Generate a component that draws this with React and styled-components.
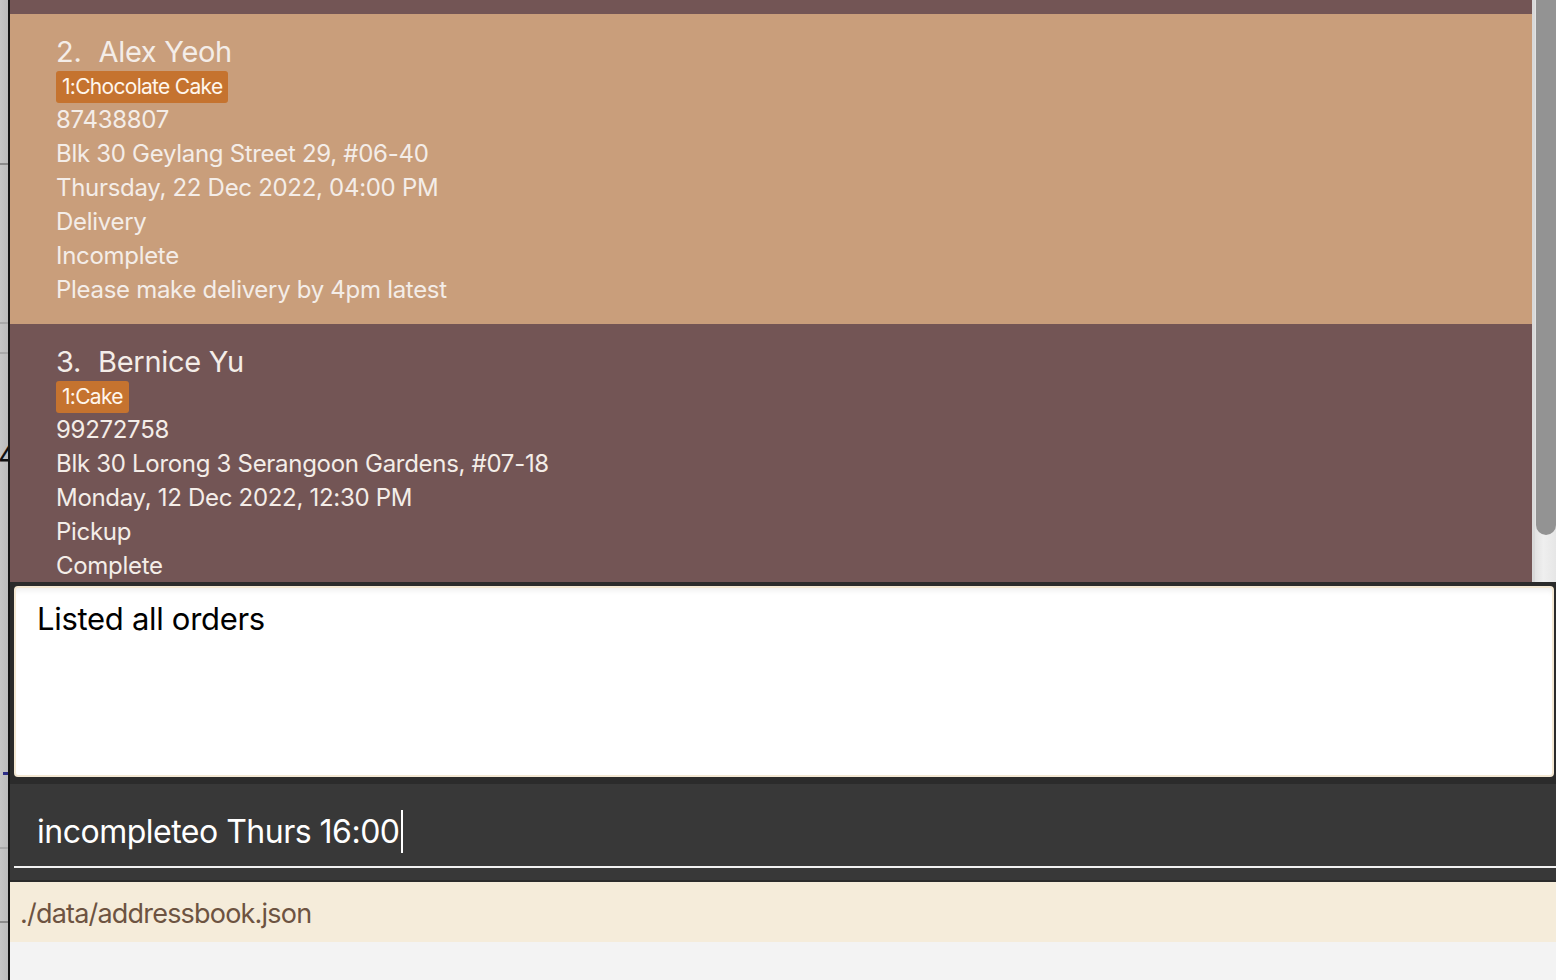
import React, { useEffect, useRef } from "react";
import styled, { createGlobalStyle } from "styled-components";

const orders = [
  {
    id: 1,
    name: "John Doe",
    tag: "2:Cupcake",
    phone: "98765432",
    address: "311, Clementi Ave 2, #02-25",
    date: "Friday, 02 Dec 2022, 10:00 AM",
    method: "Pickup",
    status: "Complete",
    note: "",
  },
  {
    id: 2,
    name: "Alex Yeoh",
    tag: "1:Chocolate Cake",
    phone: "87438807",
    address: "Blk 30 Geylang Street 29, #06-40",
    date: "Thursday, 22 Dec 2022, 04:00 PM",
    method: "Delivery",
    status: "Incomplete",
    note: "Please make delivery by 4pm latest",
  },
  {
    id: 3,
    name: "Bernice Yu",
    tag: "1:Cake",
    phone: "99272758",
    address: "Blk 30 Lorong 3 Serangoon Gardens, #07-18",
    date: "Monday, 12 Dec 2022, 12:30 PM",
    method: "Pickup",
    status: "Complete",
    note: "",
  },
];

const GlobalStyle = createGlobalStyle`
  html, body {
    margin: 0;
    padding: 0;
    background: #f3f3f3;
    font-family: Inter, "Open Sans", sans-serif;
  }
`;

const App = () => {
  const listRef = useRef(null);
  const firstRef = useRef(null);

  useEffect(() => {
    // list is scrolled so only the bottom of the first card shows
    if (listRef.current && firstRef.current) {
      listRef.current.scrollTop = firstRef.current.offsetHeight - 14;
    }
  }, []);

  return (
    <>
      <GlobalStyle />
      <Screen>
        <BackWindow>
          <StripLine top={163} />
          <StripLine top={322} light />
          <StripLine top={352} light />
          <StripGlyph>4</StripGlyph>
          <StripDash />
          <StripLine top={847} light />
          <StripLine top={921} />
        </BackWindow>
        <Window>
          <ListArea>
            <ListViewport ref={listRef}>
              {orders.map((o, i) => (
                <OrderCard key={o.id} ref={i === 0 ? firstRef : null} light={o.id % 2 === 0}>
                  <Name>
                    <Index>{o.id}.</Index>
                    {o.name}
                  </Name>
                  <Tag>{o.tag}</Tag>
                  <Detail>{o.phone}</Detail>
                  <Detail>{o.address}</Detail>
                  <Detail>{o.date}</Detail>
                  <Detail>{o.method}</Detail>
                  <Detail>{o.status}</Detail>
                  {o.note && <Detail>{o.note}</Detail>}
                </OrderCard>
              ))}
            </ListViewport>
            <ScrollTrack>
              <ScrollThumb />
            </ScrollTrack>
          </ListArea>
          <ResultPane>
            <ResultBox>Listed all orders</ResultBox>
          </ResultPane>
          <CommandPane>
            <CommandField>
              incompleteo Thurs 16:00
              <Caret />
            </CommandField>
          </CommandPane>
          <StatusBar>./data/addressbook.json</StatusBar>
          <Footer />
        </Window>
      </Screen>
    </>
  );
};

const Screen = styled.div`
  display: flex;
  width: 1556px;
  height: 980px;
  overflow: hidden;
`;

const BackWindow = styled.div`
  position: relative;
  flex: 0 0 8px;
  background: linear-gradient(90deg, #c6c6c6, #bcbcbc);
  border-right: 2px solid #151515;
  overflow: hidden;
`;

const StripLine = styled.div`
  position: absolute;
  left: 0;
  right: 0;
  top: ${(p) => p.top}px;
  height: 2px;
  background: ${(p) => (p.light ? "#a9a9a9" : "#8a8a8a")};
`;

const StripGlyph = styled.span`
  position: absolute;
  top: 437px;
  left: -2px;
  font-size: 30px;
  line-height: 36px;
  color: #111;
`;

const StripDash = styled.div`
  position: absolute;
  top: 772px;
  left: 3px;
  width: 6px;
  height: 3px;
  background: #2c2c86;
`;

const Window = styled.div`
  flex: 1;
  display: flex;
  flex-direction: column;
  min-width: 0;
`;

const ListArea = styled.div`
  display: flex;
  height: 582px;
  flex: 0 0 582px;
`;

const ListViewport = styled.div`
  flex: 1;
  overflow: hidden;
  background: #735555;
`;

const OrderCard = styled.div`
  display: flex;
  flex-direction: column;
  align-items: flex-start;
  padding: 20px 46px 17px;
  background: ${(p) => (p.light ? "#c99e7b" : "#735555")};
  color: #f4ede8;
`;

const Name = styled.div`
  font-size: 29px;
  line-height: 36px;
  letter-spacing: -0.3px;
`;

const Index = styled.span`
  margin-right: 17px;
`;

const Tag = styled.span`
  margin-top: 1px;
  height: 32px;
  line-height: 32px;
  padding: 0 6px;
  border-radius: 3px;
  background: #c5732f;
  color: #fff6ec;
  font-size: 21px;
  letter-spacing: -0.7px;
`;

const Detail = styled.div`
  font-size: 24px;
  line-height: 34px;
  letter-spacing: -0.3px;
  white-space: nowrap;
`;

const ScrollTrack = styled.div`
  flex: 0 0 21px;
  background: linear-gradient(90deg, #e2e2e2, #efefef 40%, #e6e6e6);
  border-left: 3px solid #d9d9d9;
`;

const ScrollThumb = styled.div`
  height: 535px;
  margin-left: 1px;
  background: #939393;
  border-radius: 0 0 10px 10px;
`;

const ResultPane = styled.div`
  flex: 0 0 auto;
  padding: 4px 2px 7px 4px;
  background: #2b2b2b;
`;

const ResultBox = styled.div`
  height: 164px;
  padding: 13px 21px 10px;
  background: #fff;
  border: 2px solid #f4e8d3;
  border-radius: 4px;
  box-shadow: inset 0 6px 6px -4px rgba(0, 0, 0, 0.08);
  color: #000;
  font-size: 31px;
  line-height: 36px;
  letter-spacing: -0.3px;
`;

const CommandPane = styled.div`
  flex: 0 0 auto;
  padding: 0 0 12px 4px;
  background: #383838;
  border-left: 2px solid #2b2b2b;
  border-bottom: 2px solid #2b2b2b;
  margin-left: -2px;
`;

const CommandField = styled.div`
  display: flex;
  align-items: flex-end;
  height: 84px;
  box-sizing: border-box;
  padding: 0 0 13px 23px;
  border-bottom: 2px solid #f2f2f2;
  color: #fff;
  font-size: 32px;
  line-height: 43px;
  letter-spacing: -0.5px;
`;

const Caret = styled.span`
  width: 2px;
  height: 43px;
  margin-left: 1px;
  background: #fff;
`;

const StatusBar = styled.div`
  flex: 0 0 60px;
  display: flex;
  align-items: center;
  padding: 3px 0 0 10px;
  box-sizing: border-box;
  background: #f5ecda;
  color: #6d5341;
  font-size: 27px;
  letter-spacing: -0.8px;
`;

const Footer = styled.div`
  flex: 1;
  background: #f3f3f3;
`;

export default App;
